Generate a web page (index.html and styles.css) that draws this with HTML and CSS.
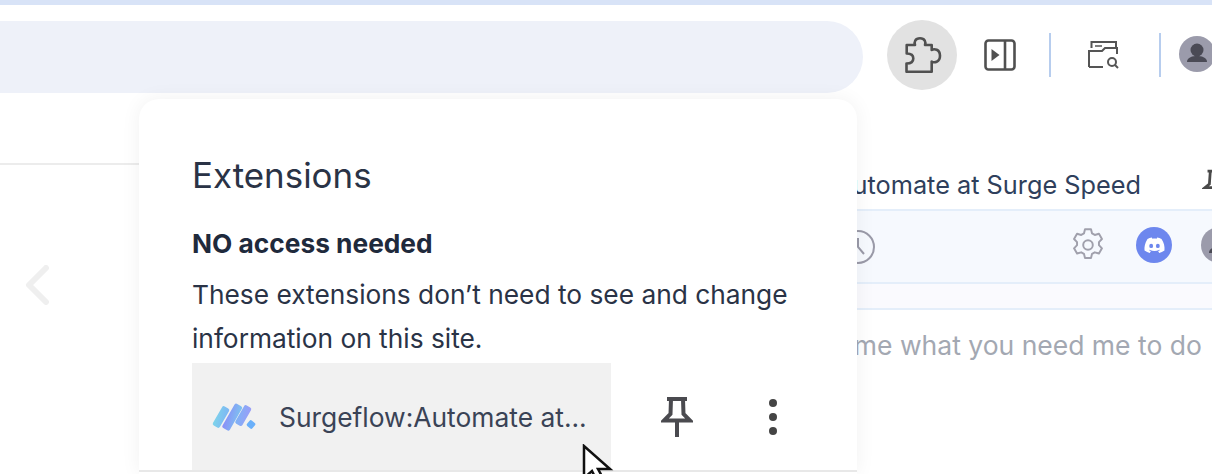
FILE: index.html
```html
<!DOCTYPE html>
<html lang="en">
<head>
    <meta charset="UTF-8">
    <title>Extensions</title>
    <link rel="stylesheet" href="styles.css">
</head>
<body>
    <div class="top-strip"></div>
    <div class="toolbar">
        <div class="address-bar"></div>
        <div class="tools">
            <div class="tool-btn active">
                <svg width="42" height="42" viewBox="0 0 42 42" fill="none" stroke="#505050" stroke-width="2.600" stroke-linejoin="round"><path d="M5.700 11H14C13 8 14 4.300 19 4.300S25 8 24 11h6.700v5C33 14.500 39 15 39 21.800S33 29 30.700 27.500v10.200H5.500v-8.200C8 29.500 12.300 29 12.300 24.500S8 19.500 5.700 19.500z"/></svg>
            </div>
            <div class="tool-btn side-btn">
                <svg width="32" height="32" viewBox="0 0 32 32" fill="none"><rect x="1.500" y="1.500" width="29" height="29" rx="3" stroke="#505050" stroke-width="2.600"/><path d="M21 2v28" stroke="#505050" stroke-width="2.600"/><path d="M7.500 10l8 6-8 6z" fill="#505050"/></svg>
            </div>
            <div class="divider"></div>
            <div class="tool-btn search-btn">
                <svg width="32" height="30" viewBox="0 0 32 30" fill="none" stroke="#555" stroke-width="2"><path d="M3.500 8V2h24.500v6"/><path d="M7 6h7" stroke-width="1.500"/><path d="M1 27V11h13l3-3h12v6"/><path d="M1 27h14"/><circle cx="24" cy="22" r="4"/><path d="M27 25l3 3"/></svg>
            </div>
            <div class="divider second"></div>
            <div class="avatar toolbar-avatar">
                <svg width="36" height="36" viewBox="0 0 36 36"><circle cx="18" cy="14" r="6.500" fill="#4a4a55"/><path d="M8 26c0-5 6-6 10-6s10 1 10 6z" fill="#4a4a55"/></svg>
            </div>
        </div>
    </div>

    <div class="page">
        <div class="left-pane">
            <div class="left-head"></div>
            <div class="back-arrow">
                <svg width="26" height="40" viewBox="0 0 26 40" fill="none"><path d="M22 3L5 20l17 17" stroke="#efefef" stroke-width="6" stroke-linecap="round" stroke-linejoin="round"/></svg>
            </div>
        </div>
        <div class="side-panel">
            <div class="panel-title">
                <span class="panel-name">Surgeflow:Automate at Surge Speed</span>
                <svg class="panel-pin" width="24" height="32" viewBox="0 0 26 34" fill="none" stroke="#4a4a4a" stroke-width="3"><path d="M6 3h14M9 3l-1 14-5 4h20l-5-4-1-14M13 21v12"/></svg>
            </div>
            <div class="panel-actions">
                <svg class="history-icon" width="36" height="36" viewBox="0 0 36 36" fill="none" stroke="#9a9aa8" stroke-width="2"><circle cx="18" cy="18" r="16"/><path d="M18 9v9l6 7"/></svg>
                <svg class="gear-icon" width="36" height="36" viewBox="0 0 24 24" fill="none" stroke="#a0a0ac" stroke-width="1.300" stroke-linejoin="round"><path d="M10 1.500h4l.7 2.800 1.800 1 2.800-.8 2 3.500-2 2.100v2l2 2.100-2 3.500-2.800-.8-1.800 1-.7 2.800h-4l-.7-2.800-1.800-1-2.800.8-2-3.500 2-2.100v-2l-2-2.100 2-3.500 2.800.8 1.800-1z"/><circle cx="12" cy="12" r="3.200"/></svg>
                <div class="discord-icon">
                    <svg width="21" height="16" viewBox="0 0 24 18"><path d="M20 2c-1.500-.7-3.200-1.200-5-1.500l-.6 1.300c-1.600-.3-3.200-.3-4.800 0L9 .5C7.200.8 5.500 1.300 4 2 1 6.500.2 11 .6 15.300c2 1.500 4 2.300 6 2.700l1.300-2.100c-.7-.3-1.400-.6-2-1l.5-.4c3.800 1.800 7.400 1.800 11.200 0l.5.4c-.6.400-1.300.7-2 1l1.300 2.100c2-.4 4-1.200 6-2.700C23.900 10.300 22.800 6 20 2z" fill="#fff"/><ellipse cx="8.200" cy="10" rx="2.200" ry="2.500" fill="#6d87ee"/><ellipse cx="15.800" cy="10" rx="2.200" ry="2.500" fill="#6d87ee"/></svg>
                </div>
                <div class="avatar panel-avatar">
                    <svg width="36" height="36" viewBox="0 0 36 36"><circle cx="18" cy="14" r="6.500" fill="#4a4a55"/><path d="M8 26c0-5 6-6 10-6s10 1 10 6z" fill="#4a4a55"/></svg>
                </div>
            </div>
            <div class="panel-strip"></div>
            <div class="panel-prompt">Tell me what you need me to do</div>
        </div>
    </div>

    <div class="popup">
        <h2 class="popup-title">Extensions</h2>
        <div class="popup-sub">NO access needed</div>
        <p class="popup-text">These extensions don’t need to see and change information on this site.</p>
        <div class="ext-row">
            <div class="ext-item">
                <svg width="46" height="30" viewBox="0 0 46 30">
                    <defs>
                        <linearGradient id="barA" x1="0" y1="1" x2="1" y2="0"><stop offset="0" stop-color="#7fd6ea"/><stop offset="1" stop-color="#7db4f5"/></linearGradient>
                        <linearGradient id="barB" x1="0" y1="1" x2="1" y2="0"><stop offset="0" stop-color="#8b8df8"/><stop offset="1" stop-color="#7cc4f0"/></linearGradient>
                        <linearGradient id="barC" x1="0" y1="1" x2="1" y2="0"><stop offset="0" stop-color="#7db4f5"/><stop offset="1" stop-color="#9a9cf8"/></linearGradient>
                    </defs>
                    <rect x="6" y="4" width="8" height="22" rx="2" transform="rotate(30 10 15)" fill="url(#barA)"/>
                    <rect x="17" y="1" width="8.500" height="28" rx="2" transform="rotate(30 21 15)" fill="url(#barB)"/>
                    <rect x="28" y="3" width="8" height="21" rx="2" transform="rotate(30 32 14)" fill="url(#barC)"/>
                    <rect x="36.500" y="19" width="7" height="7" rx="1.500" transform="rotate(40 40 22.500)" fill="#6ab0fa"/>
                </svg>
                <span class="ext-name">Surgeflow:Automate at...</span>
            </div>
            <svg class="ext-pin" width="32" height="42" viewBox="0 0 32 42" fill="none" stroke="#4a4a4f" stroke-width="4"><path d="M6 3h20M10 3L9.500 18 3 24.500h26L22.500 18 22 3M16 25v16"/></svg>
            <div class="ext-more"><i></i><i></i><i></i></div>
        </div>
        <div class="popup-foot"></div>
    </div>

    <svg class="cursor" width="32" height="38" viewBox="0 0 32 38"><path d="M2 2v32l8-7 5 10 6-3-5-9h12z" fill="#fff" stroke="#111" stroke-width="2.500" stroke-linejoin="miter"/></svg>
</body>
</html>
```

FILE: styles.css
```css
html, body {
    margin: 0;
    height: 474px;
    overflow: hidden;
    background: #fff;
}
body {
    font-family: Inter, "Noto Sans", sans-serif;
    color: #2a3346;
    position: relative;
}
.top-strip {
    height: 5px;
    background: #d8e3f7;
}
.toolbar {
    display: flex;
    align-items: center;
    height: 72px;
    margin-top: 16px;
}
.address-bar {
    width: 903px;
    height: 72px;
    margin-left: -40px;
    flex: none;
    border-radius: 36px;
    background: #eef1f9;
}
.tools {
    display: flex;
    align-items: center;
    margin-top: -4px;
    flex: none;
}
.tool-btn {
    display: flex;
    align-items: center;
    justify-content: center;
    flex: none;
}
.tool-btn.active {
    width: 70px;
    height: 70px;
    margin-left: 24px;
    border-radius: 50%;
    background: #e2e2e2;
}
.side-btn {
    margin-left: 27px;
}
.divider {
    width: 2px;
    height: 44px;
    margin-left: 33px;
    background: #b7cdee;
    flex: none;
}
.search-btn {
    margin-left: 37px;
}
.divider.second {
    margin-left: 39px;
}
.avatar {
    width: 36px;
    height: 36px;
    border-radius: 50%;
    background: #9b9bab;
    flex: none;
    overflow: hidden;
}
.toolbar-avatar {
    margin-left: 18px;
    margin-top: -3px;
}
.page {
    display: flex;
    height: 381px;
}
.left-pane {
    width: 857px;
    flex: none;
}
.left-head {
    height: 69px;
    margin-top: 1px;
    border-bottom: 2px solid #ececec;
}
.back-arrow {
    margin: 100px 0 0 24px;
}
.side-panel {
    flex: 1;
    min-width: 0;
}
.panel-title {
    height: 118px;
    box-sizing: border-box;
    padding-top: 66px;
    display: flex;
    align-items: center;
    justify-content: flex-end;
    gap: 61px;
    border-bottom: 2px solid #e4eefa;
    font-size: 25.300px;
    white-space: nowrap;
    margin-right: -14px;
}
.panel-name {
    color: #2f3f5c;
}
.panel-pin {
    flex: none;
}
.panel-actions {
    height: 71px;
    background: #f6f9fe;
    border-bottom: 2px solid #e4eefa;
    display: flex;
    align-items: center;
}
.history-icon {
    margin-left: -17px;
    flex: none;
}
.gear-icon {
    margin: -4px 0 0 194px;
    flex: none;
}
.discord-icon {
    width: 36px;
    height: 36px;
    margin: -4px 0 0 30px;
    border-radius: 50%;
    background: #6d87ee;
    display: flex;
    align-items: center;
    justify-content: center;
    flex: none;
}
.panel-avatar {
    margin: -4px 0 0 29px;
}
.panel-strip {
    height: 24px;
    background: #fafafe;
    border-bottom: 2px solid #e4eefa;
}
.panel-prompt {
    margin: 19px 0 0 -54px;
    font-size: 26.500px;
    color: #a3a8b2;
    white-space: nowrap;
}
.popup {
    position: absolute;
    left: 139px;
    top: 99px;
    width: 718px;
    height: 375px;
    overflow: hidden;
    box-sizing: border-box;
    padding: 54px 53px 0;
    background: #fff;
    border-radius: 20px 20px 0 0;
    box-shadow: 0 0 20px rgba(0,0,0,0.06);
}
.popup-title {
    margin: 0;
    font-size: 34.900px;
    line-height: 44px;
    font-weight: 400;
    color: #2a3346;
}
.popup-sub {
    margin-top: 31px;
    font-size: 26.300px;
    line-height: 32px;
    font-weight: 700;
    color: #1f2a3c;
}
.popup-text {
    margin: 13px 0 0;
    width: 620px;
    font-size: 26.300px;
    line-height: 44px;
    color: #2a3346;
}
.ext-row {
    display: flex;
    align-items: center;
    margin-top: 2px;
    height: 107px;
}
.ext-item {
    width: 419px;
    height: 107px;
    box-sizing: border-box;
    padding-left: 19px;
    background: #f1f1f1;
    display: flex;
    align-items: center;
    gap: 22px;
    flex: none;
}
.ext-item svg {
    flex: none;
}
.ext-name {
    font-size: 26.400px;
    color: #3a4356;
    white-space: nowrap;
}
.ext-pin {
    margin-left: 50px;
    flex: none;
}
.ext-more {
    margin-left: 76px;
    display: flex;
    flex-direction: column;
    gap: 6px;
}
.ext-more i {
    width: 8px;
    height: 8px;
    border-radius: 50%;
    background: #444;
}
.popup-foot {
    border-top: 2px solid #e8e8e8;
    margin: 0 -53px;
}
.cursor {
    position: absolute;
    left: 582px;
    top: 444px;
}
```
